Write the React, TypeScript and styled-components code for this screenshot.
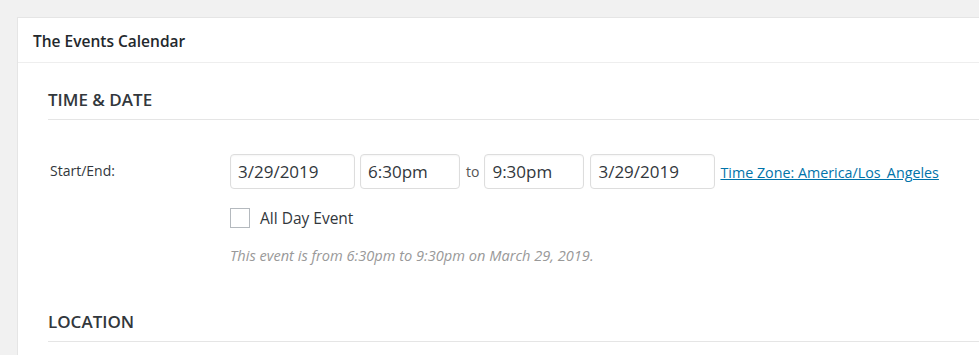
import React from "react";
import styled, { createGlobalStyle } from "styled-components";

const Global = createGlobalStyle`
  html, body { margin: 0; padding: 0; background: #f1f1f1; overflow: hidden; }
  body { font-family: "Open Sans", "Noto Sans", sans-serif; color: #23282d; }
`;

const Page = styled.div`
  padding: 17px 0 0 17px;
  height: 355px;
  box-sizing: border-box;
`;

const Card = styled.div`
  background: #fff;
  border: 1px solid #e5e5e5;
  border-right: none;
  border-bottom: none;
  height: 100%;
  box-sizing: border-box;
`;

const CardHeader = styled.div`
  height: 45px;
  box-sizing: border-box;
  border-bottom: 1px solid #eeeeee;
  padding-left: 15px;
  padding-top: 1px;
  display: flex;
  align-items: center;
  font-size: 15.5px;
  font-weight: 600;
  color: #23282d;
`;

const CardBody = styled.div`
  padding-left: 30px;
`;

const SectionTitle = styled.div<{ $top: number }>`
  margin-top: ${(p) => p.$top}px;
  padding: 0 0 8px 0;
  border-bottom: 1px solid #e5e5e5;
  font-size: 17px;
  font-weight: 600;
  color: #32373c;
  line-height: 22px;
`;

const Row = styled.div`
  display: flex;
  margin-top: 34px;
`;

const Label = styled.div`
  width: 180px;
  padding-left: 2px;
  padding-top: 7px;
  font-size: 14px;
  color: #32373c;
`;

const Fields = styled.div`
  display: flex;
  flex-direction: column;
`;

const InputLine = styled.div`
  display: flex;
  align-items: center;
  gap: 5px;
`;

const TextInput = styled.input<{ $w: number; $ml?: number }>`
  width: ${(p) => p.$w}px;
  margin-left: ${(p) => p.$ml ?? 0}px;
  height: 35px;
  box-sizing: border-box;
  border: 1px solid #dddddd;
  border-radius: 4px;
  padding: 0 7px;
  font-family: "Open Sans", "Noto Sans", sans-serif;
  font-size: 17px;
  color: #32373c;
  background: #fff;
  box-shadow: inset 0 1px 2px rgba(0, 0, 0, 0.04);
  outline: none;
`;

const To = styled.span`
  font-size: 14px;
  color: #555;
  margin-left: 1px;
`;

const TzLink = styled.a`
  font-size: 14.3px;
  color: #0073aa;
  text-decoration: underline;
  padding-top: 2px;
`;

const CheckLine = styled.label`
  display: flex;
  align-items: center;
  margin-top: 18px;
  font-size: 15.5px;
  color: #32373c;
`;

const Box = styled.span`
  width: 20px;
  height: 20px;
  box-sizing: border-box;
  border: 1px solid #b4b9be;
  background: #fff;
  margin-right: 10px;
`;

const Note = styled.div`
  margin-top: 16px;
  font-size: 14.6px;
  font-style: italic;
  color: #999;
`;

export default function App() {
  return (
    <>
      <Global />
      <Page>
        <Card>
          <CardHeader>The Events Calendar</CardHeader>
          <CardBody>
            <SectionTitle $top={26}>TIME &amp; DATE</SectionTitle>
            <Row>
              <Label>Start/End:</Label>
              <Fields>
                <InputLine>
                  <TextInput $w={125} defaultValue="3/29/2019" />
                  <TextInput $w={100} defaultValue="6:30pm" />
                  <To>to</To>
                  <TextInput $w={100} defaultValue="9:30pm" />
                  <TextInput $w={125} $ml={1} defaultValue="3/29/2019" />
                  <TzLink href="#">Time Zone: America/Los_Angeles</TzLink>
                </InputLine>
                <CheckLine>
                  <Box />
                  All Day Event
                </CheckLine>
                <Note>This event is from 6:30pm to 9:30pm on March 29, 2019.</Note>
              </Fields>
            </Row>
            <SectionTitle $top={46}>LOCATION</SectionTitle>
          </CardBody>
        </Card>
      </Page>
    </>
  );
}
